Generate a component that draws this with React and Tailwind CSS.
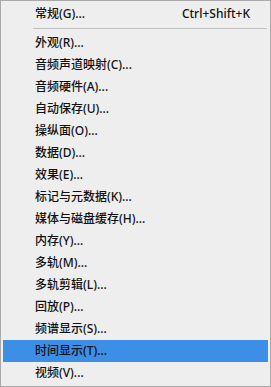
import React from 'react';

const items = [
  '外观(R)...',
  '音频声道映射(C)...',
  '音频硬件(A)...',
  '自动保存(U)...',
  '操纵面(O)...',
  '数据(D)...',
  '效果(E)...',
  '标记与元数据(K)...',
  '媒体与磁盘缓存(H)...',
  '内存(Y)...',
  '多轨(M)...',
  '多轨剪辑(L)...',
  '回放(P)...',
  '频谱显示(S)...',
  '时间显示(T)...',
  '视频(V)...',
];

const MenuRow = ({ label, shortcut, active }) => (
  <div
    className={`h-[22px] flex items-center pl-[32px] pr-[18px] ${active ? 'bg-[#3d8ee7]' : ''}`}
  >
    <span className="flex-1">{label}</span>
    {shortcut && <span>{shortcut}</span>}
  </div>
);

export default function App() {
  return (
    <div
      className="w-[271px] h-[387px] overflow-hidden border border-[#a9a9a9] bg-[#eeeeee] p-[2px] text-[12px] font-medium text-[#111111]"
      style={{ fontFamily: '"Noto Sans", "Noto Sans CJK SC", sans-serif' }}
    >
      <MenuRow label="常规(G)..." shortcut="Ctrl+Shift+K" />
      <div className="h-[7px] flex items-center pl-[30px] pr-[1px]">
        <div className="w-full h-px bg-[#c0c0c0]" />
      </div>
      {items.map((label) => (
        <MenuRow key={label} label={label} active={label === '时间显示(T)...'} />
      ))}
    </div>
  );
}
